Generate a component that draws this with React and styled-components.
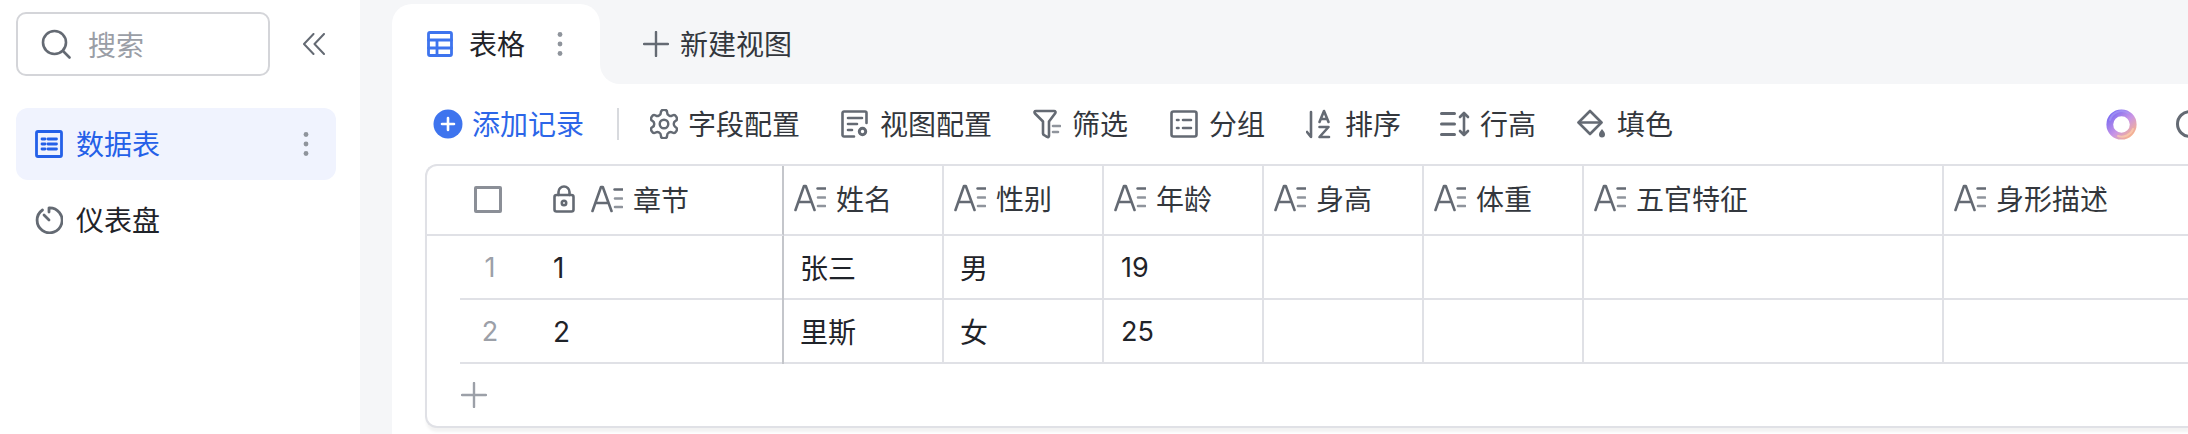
import React from 'react';
import styled, { createGlobalStyle } from 'styled-components';

const Global = createGlobalStyle`
  html, body { margin: 0; padding: 0; background: #fff; }
  body { font-family: "Noto Sans CJK SC", "Inter", sans-serif; overflow: hidden; }
  * { box-sizing: border-box; }
`;

const Page = styled.div`
  display: flex;
  width: 2188px;
  height: 434px;
  overflow: hidden;
  color: #1f2329;
`;

const Sidebar = styled.aside`
  width: 360px;
  flex: none;
  padding: 12px 24px 0 16px;
  background: #fff;
`;

const SearchRow = styled.div`
  display: flex;
  align-items: center;
  justify-content: space-between;
  padding-right: 11px;
  margin-bottom: 32px;
`;

const SearchBox = styled.div`
  width: 254px;
  height: 64px;
  border: 2px solid #d4d5d9;
  border-radius: 10px;
  display: flex;
  align-items: center;
  gap: 17px;
  padding-left: 23px;
  font-size: 28px;
  line-height: 1;
  color: #9a9ea6;
`;

const NavList = styled.nav`
  display: flex;
  flex-direction: column;
  gap: 4px;
`;

const NavItem = styled.div`
  height: 72px;
  border-radius: 12px;
  display: flex;
  align-items: center;
  gap: 13px;
  padding: 0 26px 0 19px;
  font-size: 28px;
  background: ${p => (p.$active ? '#f0f3fe' : 'transparent')};
  color: ${p => (p.$active ? '#2460e8' : '#1f2329')};
`;

const NavLabel = styled.span`
  flex: 1;
  padding-bottom: 2px;
`;

const Main = styled.main`
  flex: 1;
  min-width: 0;
  background: #f5f6f8;
  padding-left: 32px;
`;

const TabBar = styled.div`
  display: flex;
  height: 84px;
  padding-top: 4px;
`;

const ActiveTab = styled.div`
  width: 208px;
  height: 80px;
  background: #fff;
  border-radius: 20px 20px 0 0;
  display: flex;
  align-items: center;
  gap: 16px;
  padding-left: 35px;
  font-size: 28px;
  flex: none;
`;

const TabLabel = styled.span`
  width: 71px;
  padding-bottom: 2px;
`;

const TabCornerBack = styled.div`
  width: 20px;
  height: 80px;
  flex: none;
  background: #fff;
`;

const NewViewTab = styled.div`
  flex: 1;
  height: 80px;
  margin-left: -20px;
  background: #f5f6f8;
  border-bottom-left-radius: 20px;
  display: flex;
  align-items: center;
  gap: 11px;
  padding-left: 43px;
  font-size: 28px;
  color: #33373d;
`;

const NewViewLabel = styled.span`
  padding-bottom: 2px;
`;

const Panel = styled.div`
  background: #fff;
  height: 350px;
  padding-left: 33px;
`;

const Toolbar = styled.div`
  height: 80px;
  display: flex;
  align-items: center;
  margin-left: 8px;
  font-size: 28px;
  color: #33373d;
`;

const ToolButton = styled.div`
  display: flex;
  align-items: center;
  flex: none;
  gap: ${p => p.$gap ?? 11}px;
  margin-right: ${p => p.$after ?? 41}px;
  color: ${p => (p.$blue ? '#2c66e8' : 'inherit')};
`;

const ToolLabel = styled.span`
  padding-bottom: 2px;
`;

const Divider = styled.div`
  width: 2px;
  height: 32px;
  background: #d8dade;
  margin-right: 31px;
  flex: none;
`;

const Spacer = styled.div`
  flex: 1;
`;

const RightIcons = styled.div`
  display: flex;
  align-items: center;
  gap: 39px;
  width: 82px;
  flex: none;
`;

const TableFrame = styled.div`
  height: 264px;
  width: 1765px;
  border: solid #e0e1e6;
  border-width: 2px 0 2px 2px;
  border-radius: 12px 0 0 12px;
  box-shadow: 0 5px 3px -1px rgba(0, 0, 0, 0.05);
  overflow: hidden;
  background: #fff;
`;

const Row = styled.div`
  display: flex;
  height: ${p => (p.$head ? 70 : 64)}px;
`;

const FrozenHead = styled.div`
  width: 357px;
  flex: none;
  display: flex;
  align-items: center;
  padding: 0 0 2px 47px;
  border-right: 2px solid #c4c6cb;
  border-bottom: 2px solid #e0e1e6;
`;

const FrozenRow = styled.div`
  width: 357px;
  flex: none;
  padding-left: 33px;
  border-right: 2px solid #c4c6cb;
`;

const FrozenBody = styled.div`
  height: 100%;
  display: flex;
  align-items: center;
  padding-top: 1px;
  border-bottom: 2px solid #e0e1e6;
`;

const IndexNum = styled.span`
  width: 60px;
  flex: none;
  text-align: center;
  font-family: "Inter", sans-serif;
  font-size: 27px;
  color: #9ca0a8;
`;

const FrozenValue = styled.span`
  margin-left: 33px;
  font-family: "Inter", sans-serif;
  font-size: 28px;
  color: #1f2329;
`;

const Cell = styled.div`
  width: ${p => p.$w}px;
  flex: none;
  display: flex;
  align-items: center;
  gap: 10px;
  padding-left: ${p => (p.$head ? 10 : 16)}px;
  padding-bottom: ${p => (p.$head ? 4 : 0)}px;
  font-size: 28px;
  border-right: ${p => (p.$last ? 'none' : '2px solid #e0e1e6')};
  border-bottom: 2px solid #e0e1e6;
  color: ${p => (p.$head ? '#33373d' : '#1f2329')};
`;

const NumberText = styled.span`
  font-family: "Inter", sans-serif;
  font-size: 27px;
  padding: 1px 0 0 1px;
`;

const CheckBox = styled.div`
  width: 28px;
  height: 27px;
  border: 3px solid #8b8f97;
  border-radius: 2px;
  margin-right: 51px;
  flex: none;
`;

const HeadFrozen = styled.div`
  display: flex;
  align-items: center;
  gap: 10px;
  font-size: 28px;
  color: #33373d;
`;

const LockSlot = styled.span`
  display: block;
  margin-right: 6px;
`;

const AddRow = styled.div`
  height: 62px;
  display: flex;
  align-items: center;
  padding-left: 34px;
`;

const Icon = styled.svg`
  display: block;
  flex: none;
  fill: none;
  stroke: ${p => p.$color || '#646a73'};
  stroke-width: ${p => p.$sw ?? 2.4};
  stroke-linecap: round;
  stroke-linejoin: round;
`;

const Dots = () => (
  <Icon width="8" height="26" viewBox="0 0 8 26" $sw={0}>
    <circle cx="4" cy="3.5" r="2.4" fill="#8f949c" />
    <circle cx="4" cy="13" r="2.4" fill="#8f949c" />
    <circle cx="4" cy="22.5" r="2.4" fill="#8f949c" />
  </Icon>
);

const FieldA = () => (
  <Icon width="32" height="28" viewBox="0 0 32 28" $sw={2.6}>
    <path d="M1.5 26 10 2h1.800L20.500 26M5 18h12" />
    <path d="M23.500 4.500h8" strokeWidth="2.4" />
    <path d="M24 13.500h7M24 22h7" stroke="#8f949c" />
  </Icon>
);

const Lock = () => (
  <Icon width="22" height="28" viewBox="0 0 22 28" $sw={2.6}>
    <rect x="1.500" y="10" width="19" height="16.500" rx="2" />
    <path d="M5.500 10V7a5.500 5.500 0 0 1 11 0v3" />
    <circle cx="11" cy="18" r="2.200" />
  </Icon>
);

const Plus = ({ c }) => (
  <Icon width="26" height="26" viewBox="0 0 26 26" $color={c}>
    <path d="M13 1v24M1 13h24" />
  </Icon>
);

const Gear = () => (
  <Icon width="28" height="30" viewBox="2.500 1.500 19 21" $sw={1.700}>
    <path d="M12.220 2h-.44a2 2 0 0 0-2 2v.18a2 2 0 0 1-1 1.730l-.43.25a2 2 0 0 1-2 0l-.15-.08a2 2 0 0 0-2.730.73l-.22.38a2 2 0 0 0 .73 2.730l.15.1a2 2 0 0 1 1 1.720v.51a2 2 0 0 1-1 1.740l-.15.09a2 2 0 0 0-.73 2.730l.22.38a2 2 0 0 0 2.730.73l.15-.08a2 2 0 0 1 2 0l.43.25a2 2 0 0 1 1 1.730V20a2 2 0 0 0 2 2h.44a2 2 0 0 0 2-2v-.18a2 2 0 0 1 1-1.730l.43-.25a2 2 0 0 1 2 0l.15.08a2 2 0 0 0 2.730-.73l.22-.39a2 2 0 0 0-.73-2.730l-.15-.08a2 2 0 0 1-1-1.740v-.5a2 2 0 0 1 1-1.740l.15-.09a2 2 0 0 0 .73-2.730l-.22-.38a2 2 0 0 0-2.730-.73l-.15.08a2 2 0 0 1-2 0l-.43-.25a2 2 0 0 1-1-1.730V4a2 2 0 0 0-2-2z" />
    <circle cx="12" cy="12" r="3" />
  </Icon>
);

const columns = [
  ['姓名', 160], ['性别', 160], ['年龄', 160], ['身高', 160], ['体重', 160], ['五官特征', 360], ['身形描述', 244],
];

const rows = [
  { i: 1, c: '1', name: '张三', sex: '男', age: '19' },
  { i: 2, c: '2', name: '里斯', sex: '女', age: '25' },
];

export default function App() {
  return (
    <Page>
      <Global />
      <Sidebar>
        <SearchRow>
          <SearchBox>
            <Icon width="30" height="30" viewBox="0 0 30 30" $sw={2.6}>
              <circle cx="13.500" cy="13.500" r="11.500" />
              <path d="M22 22l6.500 6.500" />
            </Icon>
            搜索
          </SearchBox>
          <Icon width="22" height="22" viewBox="0 0 22 22" $sw={2}>
            <path d="M10.500 1 1 11l9.500 10M21 1l-9.500 10L21 21" />
          </Icon>
        </SearchRow>
        <NavList>
          <NavItem $active>
            <Icon width="28" height="28" viewBox="0 0 28 28" $color="#2460e8" $sw={2.800}>
              <rect x="1.500" y="1.500" width="25" height="25" rx="1.500" />
              <path d="M7 9h3M13 9h8.500M7 14h3M13 14h8.500M7 19h3M13 19h8.500" />
            </Icon>
            <NavLabel>数据表</NavLabel>
            <Dots />
          </NavItem>
          <NavItem>
            <Icon width="28" height="28" viewBox="0 0 28 28" $sw={2.800}>
              <path d="M7.500 4A12.500 12.500 0 1 0 14 1.800V6" />
              <path d="M9 9l5 5" />
            </Icon>
            <NavLabel>仪表盘</NavLabel>
          </NavItem>
        </NavList>
      </Sidebar>
      <Main>
        <TabBar>
          <ActiveTab>
            <Icon width="26" height="26" viewBox="0 0 26 26" $color="#3e74ee" $sw={2.800}>
              <rect x="1.500" y="1.500" width="23" height="23" rx="1.500" />
              <path d="M1.500 9h23M1.500 17h23M10 9v15.500" />
            </Icon>
            <TabLabel>表格</TabLabel>
            <Dots />
          </ActiveTab>
          <TabCornerBack />
          <NewViewTab>
            <Plus />
            <NewViewLabel>新建视图</NewViewLabel>
          </NewViewTab>
        </TabBar>
        <Panel>
          <Toolbar>
            <ToolButton $blue $gap={9} $after={33}>
              <Icon width="30" height="30" viewBox="0 0 30 30" $sw={0}>
                <circle cx="15" cy="15" r="14.500" fill="#3e74ee" />
                <path d="M15 9v12M9 15h12" stroke="#fff" strokeWidth="2.600" strokeLinecap="round" />
              </Icon>
              <ToolLabel>添加记录</ToolLabel>
            </ToolButton>
            <Divider />
            <ToolButton $gap={10}>
              <Gear />
              <ToolLabel>字段配置</ToolLabel>
            </ToolButton>
            <ToolButton>
              <Icon width="28" height="28" viewBox="0 0 28 28" $sw={2.600}>
                <path d="M13 26.500H3a1.500 1.500 0 0 1-1.500-1.500V3A1.500 1.500 0 0 1 3 1.500h21A1.500 1.500 0 0 1 25.500 3v10" />
                <path d="M7 8h14M7 14h9M7 20h4" />
                <circle cx="21.500" cy="21.500" r="3.200" strokeWidth="3" />
              </Icon>
              <ToolLabel>视图配置</ToolLabel>
            </ToolButton>
            <ToolButton $after={42}>
              <Icon width="28" height="30" viewBox="0 0 28 30" $sw={2.600}>
                <path d="M3 2h18c1.500 0 2 1 1 2.500l-6 8V27c0 1-1 1.500-2 .8L11 26a2 2 0 0 1-1-1.500v-12L2 4.500C1 3 1.500 2 3 2z" />
                <path d="M20 17h7M20 23h5" stroke="#8f949c" />
              </Icon>
              <ToolLabel>筛选</ToolLabel>
            </ToolButton>
            <ToolButton>
              <Icon width="28" height="28" viewBox="0 0 28 28" $sw={2.600}>
                <rect x="1.500" y="1.500" width="25" height="25" rx="2" />
                <path d="M7 10h1.500M13 10h8M7 18h1.500M13 18h8" />
              </Icon>
              <ToolLabel>分组</ToolLabel>
            </ToolButton>
            <ToolButton $gap={13} $after={39}>
              <Icon width="26" height="30" viewBox="0 0 26 30" $sw={2.600}>
                <path d="M5 3v25L1 23" />
                <path d="M13.500 13 18 2l4.500 11M15 10h6M13.500 18h9l-9 10h9.500" />
              </Icon>
              <ToolLabel>排序</ToolLabel>
            </ToolButton>
            <ToolButton $gap={9} $after={41}>
              <Icon width="31" height="26" viewBox="0 0 31 26" $sw={3}>
                <path d="M1.500 2.500h13M1.500 13h13M1.500 23.500h13" />
                <path d="M24 2v22M20 6l4-4 4 4M20 20l4 4 4-4" strokeWidth="2.600" />
              </Icon>
              <ToolLabel>行高</ToolLabel>
            </ToolButton>
            <ToolButton>
              <Icon width="29" height="30" viewBox="0 0 29 30" $sw={2.600}>
                <path d="M13 2 24.500 13.500 13 25 1.500 13.500z" />
                <path d="M2 13.500h22" />
                <path d="M25 20c2 2.500 3 3.500 3 5.500a3 3 0 0 1-6 0c0-2 1-3 3-5.500z" fill="#646a73" stroke="none" />
              </Icon>
              <ToolLabel>填色</ToolLabel>
            </ToolButton>
            <Spacer />
            <RightIcons>
              <Icon width="31" height="31" viewBox="0 0 31 31" $sw={0}>
                <defs>
                  <linearGradient id="logoGrad" x1="0" y1="0" x2="1" y2="1">
                    <stop offset="0" stopColor="#7568f2" />
                    <stop offset=".55" stopColor="#c995e6" />
                    <stop offset="1" stopColor="#fbb585" />
                  </linearGradient>
                </defs>
                <circle cx="15.500" cy="15.500" r="11.700" fill="none" stroke="url(#logoGrad)" strokeWidth="6.800" />
                <path d="M4 11A12 12 0 0 1 22 4" fill="none" stroke="#a99cf6" strokeWidth="2" opacity=".6" />
                <path d="M27 20A12 12 0 0 1 12 27" fill="none" stroke="#fdd0ae" strokeWidth="2" opacity=".7" />
              </Icon>
              <Icon width="28" height="28" viewBox="0 0 28 28" $sw={3}>
                <circle cx="14" cy="14" r="12.500" />
              </Icon>
            </RightIcons>
          </Toolbar>
          <TableFrame>
            <Row $head>
              <FrozenHead>
                <CheckBox />
                <HeadFrozen>
                  <LockSlot><Lock /></LockSlot>
                  <FieldA />
                  章节
                </HeadFrozen>
              </FrozenHead>
              {columns.map(([t, w], i) => (
                <Cell key={t} $w={w} $head $last={i === columns.length - 1}>
                  <FieldA />
                  {t}
                </Cell>
              ))}
            </Row>
            {rows.map(r => (
              <Row key={r.i}>
                <FrozenRow>
                  <FrozenBody>
                    <IndexNum>{r.i}</IndexNum>
                    <FrozenValue>{r.c}</FrozenValue>
                  </FrozenBody>
                </FrozenRow>
                <Cell $w={160}>{r.name}</Cell>
                <Cell $w={160}>{r.sex}</Cell>
                <Cell $w={160}><NumberText>{r.age}</NumberText></Cell>
                <Cell $w={160} />
                <Cell $w={160} />
                <Cell $w={360} />
                <Cell $w={244} $last />
              </Row>
            ))}
            <AddRow>
              <Plus c="#9ca0a8" />
            </AddRow>
          </TableFrame>
        </Panel>
      </Main>
    </Page>
  );
}
